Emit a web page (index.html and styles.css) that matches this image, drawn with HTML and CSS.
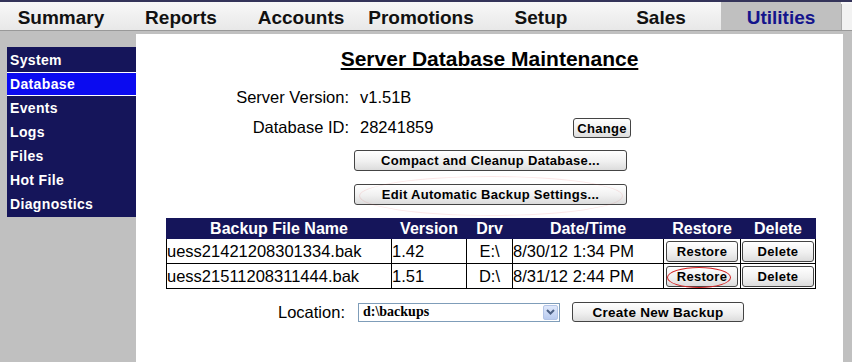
FILE: index.html
```html
<!DOCTYPE html>
<html lang="en">
<head>
    <meta charset="UTF-8">
    <title>Server Database Maintenance</title>
    <link rel="stylesheet" href="styles.css">
</head>
<body>
    <div class="tabs">
        <div class="tab">Summary</div>
        <div class="tab">Reports</div>
        <div class="tab">Accounts</div>
        <div class="tab">Promotions</div>
        <div class="tab">Setup</div>
        <div class="tab">Sales</div>
        <div class="tab active">Utilities</div>
        <div class="tab-end"></div>
    </div>

    <div class="main">
        <ul class="sidenav">
            <li>System</li>
            <li class="current">Database</li>
            <li>Events</li>
            <li>Logs</li>
            <li>Files</li>
            <li>Hot File</li>
            <li>Diagnostics</li>
        </ul>

        <div class="panel">
            <h1>Server Database Maintenance</h1>

            <div class="info">
                <div class="label">Server Version:</div>
                <div class="value">v1.51B</div>
                <div></div>
                <div class="label">Database ID:</div>
                <div class="value">28241859</div>
                <button class="btn change">Change</button>
            </div>

            <div class="actions">
                <button class="btn wide">Compact and Cleanup Database...</button>
                <div class="marked">
                    <button class="btn wide">Edit Automatic Backup Settings...</button>
                    <span class="ring faint"></span>
                </div>
            </div>

            <table class="backups">
                <colgroup>
                    <col class="c-name">
                    <col class="c-ver">
                    <col class="c-drv">
                    <col class="c-date">
                    <col class="c-restore">
                    <col class="c-delete">
                </colgroup>
                <thead>
                    <tr>
                        <th>Backup File Name</th>
                        <th>Version</th>
                        <th>Drv</th>
                        <th>Date/Time</th>
                        <th>Restore</th>
                        <th>Delete</th>
                    </tr>
                </thead>
                <tbody>
                    <tr>
                        <td>uess21421208301334.bak</td>
                        <td>1.42</td>
                        <td class="drv">E:\</td>
                        <td>8/30/12 1:34 PM</td>
                        <td class="cell-btn"><button class="btn small">Restore</button></td>
                        <td class="cell-btn"><button class="btn small">Delete</button></td>
                    </tr>
                    <tr>
                        <td>uess21511208311444.bak</td>
                        <td>1.51</td>
                        <td class="drv">D:\</td>
                        <td>8/31/12 2:44 PM</td>
                        <td class="cell-btn">
                            <div class="marked">
                                <button class="btn small">Restore</button>
                                <span class="ring"></span>
                            </div>
                        </td>
                        <td class="cell-btn"><button class="btn small">Delete</button></td>
                    </tr>
                </tbody>
            </table>

            <div class="location">
                <span class="loc-label">Location:</span>
                <div class="select">
                    <span>d:\backups</span>
                    <span class="arrow">
                        <svg width="9" height="6" viewBox="0 0 9 6"><path d="M1 1 L4.5 4.5 L8 1" fill="none" stroke="#4d6185" stroke-width="2"/></svg>
                    </span>
                </div>
                <button class="btn create">Create New Backup</button>
            </div>
        </div>
    </div>
</body>
</html>
```

FILE: styles.css
```css
body {
    margin: 0;
    background: #c0c0c0;
    font-family: "Liberation Sans", Arial, sans-serif;
    color: #000;
    height: 362px;
    overflow: hidden;
}

/* top tab strip */
.tabs {
    display: flex;
    height: 28px;
    border-top: 2px solid #34345a;
    border-bottom: 1px solid #999;
    background: linear-gradient(#f8f8f8, #e8e8e8);
    padding-left: 1px;
}
.tab {
    width: 120px;
    text-align: center;
    font-size: 19px;
    font-weight: bold;
    line-height: 32px;
    color: #111;
}
.tab.active {
    background: #c0c0c0;
    color: #14148c;
}
.tab-end {
    flex: 1;
    margin-top: 2px;
    background: #f2f2f2;
    border-left: 1px solid #a8a8a8;
}

.main {
    display: flex;
    align-items: flex-start;
}

/* left menu */
.sidenav {
    list-style: none;
    margin: 16px 0 0 7px;
    padding: 1px 0;
    width: 129px;
    background: #15155a;
}
.sidenav li {
    height: 24px;
    line-height: 24px;
    padding-left: 3px;
    color: #fff;
    font-size: 14px;
    font-weight: bold;
    letter-spacing: 0.35px;
}
.sidenav li.current {
    background: #0b0bf0;
    box-shadow: inset 0 1px #fff, inset 0 -1px #fff;
}

/* content panel */
.panel {
    flex: 1;
    margin: 3px 9px 0 0;
    height: 328px;
    background: #fff;
}
h1 {
    margin: 0;
    padding-top: 13px;
    text-align: center;
    font-size: 21px;
    line-height: 24px;
    text-decoration: underline;
}

.info {
    display: grid;
    grid-template-columns: 213px 224px auto;
    grid-auto-rows: 24px;
    row-gap: 6px;
    align-items: center;
    margin-top: 14px;
    font-size: 16.5px;
}
.info .label {
    text-align: right;
}
.info .value {
    padding-left: 11px;
}

.btn {
    font-family: "Liberation Sans", Arial, sans-serif;
    font-size: 13px;
    font-weight: bold;
    letter-spacing: 0.3px;
    color: #000;
    background: linear-gradient(#ffffff, #f0f0f0 55%, #dcdcdc);
    border: 1px solid #444;
    border-radius: 3px;
    padding: 0;
    cursor: pointer;
}
.btn.change {
    width: 58px;
    height: 20px;
    margin-top: 2px;
}
.actions {
    display: flex;
    flex-direction: column;
    align-items: flex-start;
    gap: 13px;
    margin: 11px 0 0 218px;
}
.btn.wide {
    width: 273px;
    height: 21px;
}

.marked {
    position: relative;
    display: inline-block;
}
.ring {
    position: absolute;
    left: 1px;
    top: 1px;
    width: 62px;
    height: 19px;
    border: 1px solid #d42222;
    border-radius: 50%;
    pointer-events: none;
}
.ring.faint {
    left: 5px;
    top: -8px;
    width: 262px;
    height: 38px;
    border-color: rgba(220, 60, 60, 0.12);
}

/* backups table */
.backups {
    border-collapse: collapse;
    table-layout: fixed;
    margin: 13px 0 0 30px;
    width: 649px;
    font-size: 16.5px;
}
.c-name { width: 225px; }
.c-ver { width: 75px; }
.c-drv { width: 46px; }
.c-date { width: 151px; }
.c-restore { width: 77px; }
.c-delete { width: 75px; }

.backups th {
    background: #15155a;
    color: #fff;
    font-size: 16px;
    height: 19px;
    padding: 0;
    line-height: 18px;
    border: 1px solid #15155a;
}
.backups th + th {
    border-left: 1px solid #fff;
}
.backups td {
    border: 1px solid #000;
    height: 24px;
    padding: 0;
    white-space: nowrap;
    overflow: hidden;
}
.backups td.drv {
    text-align: center;
}
.backups td.cell-btn {
    text-align: center;
}
.btn.small {
    width: 72px;
    height: 21px;
    display: block;
    margin: 0 auto;
}

/* location row */
.location {
    display: flex;
    align-items: center;
    margin: 13px 0 0 142px;
    height: 20px;
}
.loc-label {
    font-size: 16.5px;
    margin-right: 13px;
}
.select {
    display: flex;
    align-items: center;
    justify-content: space-between;
    width: 196px;
    height: 17px;
    border: 1px solid #7f9db9;
    font-family: "Liberation Serif", serif;
    font-size: 14px;
    font-weight: bold;
    padding-left: 4px;
    margin-right: 12px;
}
.select .arrow {
    width: 15px;
    height: 15px;
    margin-right: 1px;
    display: flex;
    align-items: center;
    justify-content: center;
    background: linear-gradient(#dfe8fb, #b9cbef);
    border: 1px solid #b3c4e6;
    box-sizing: border-box;
    border-radius: 2px;
}
.btn.create {
    width: 172px;
    height: 20px;
    font-size: 13.5px;
}
```
